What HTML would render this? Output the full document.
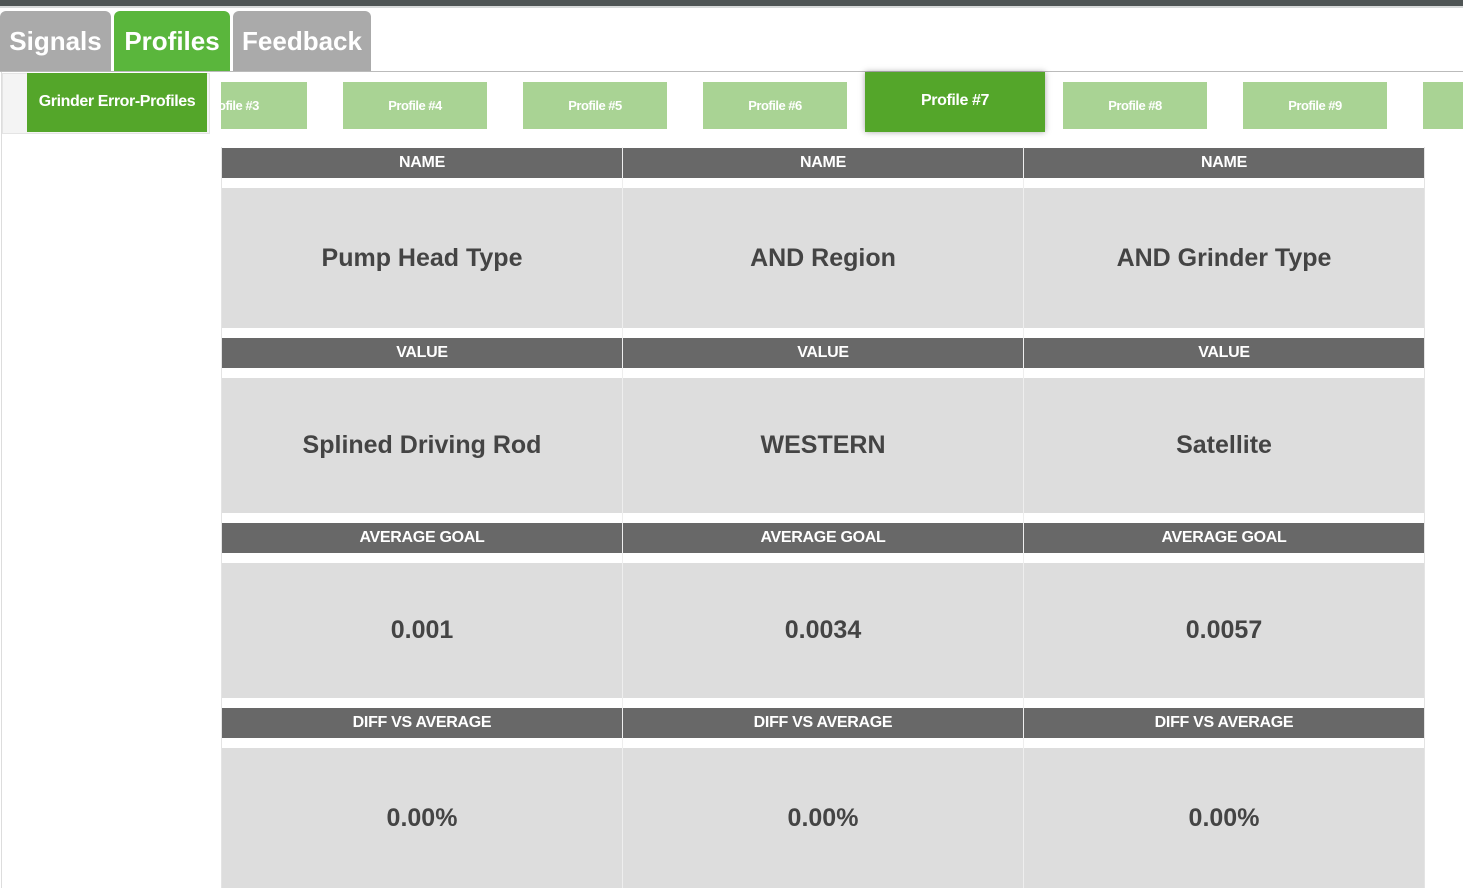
<!DOCTYPE html><html><head><style>
body{margin:0;width:1463px;height:888px;overflow:hidden;background:#fff;font-family:"Liberation Sans",sans-serif;position:relative}
.a{position:absolute;box-sizing:border-box}
.tab{top:11px;height:60px;color:#fff;font-weight:bold;font-size:26px;line-height:60px;text-align:center;border-radius:6px 6px 0 0}
.p{top:82px;height:47px;background:#a9d394;color:#fff;font-weight:bold;font-size:13px;line-height:47px;text-align:center;letter-spacing:-0.5px}
.h{background:#686868;color:#fff;font-weight:bold;font-size:16px;height:30px;line-height:30px;text-align:center;width:400px;letter-spacing:-0.3px}
.c{background:#dddddd;color:#444;font-weight:bold;font-size:25px;text-align:center;width:400px;display:flex;align-items:center;justify-content:center}
</style></head><body>
<div class="a" style="left:0;top:0;width:1463px;height:6px;background:#4f5555"></div>
<div class="a" style="left:0;top:6px;width:1463px;height:2px;background:#d8dada"></div>
<div class="a tab" style="left:0;width:111px;background:#aaa">Signals</div>
<div class="a tab" style="left:114px;width:116px;background:#5ab63c">Profiles</div>
<div class="a tab" style="left:233px;width:138px;background:#aaa">Feedback</div>
<div class="a" style="left:0;top:71px;width:1463px;height:1px;background:#bbb"></div>
<div class="a" style="left:1px;top:72px;width:1px;height:816px;background:#ddd"></div>
<div class="a" style="left:2px;top:73px;width:208px;height:61px;background:#f4f4f4;border:1px solid #e4e4e4"></div>
<div class="a" style="left:27px;top:73px;width:180px;height:59px;background:#54a62a;color:#fff;font-weight:bold;font-size:16px;line-height:58px;text-align:center;letter-spacing:-0.4px">Grinder Error-Profiles</div>
<div class="a p" style="left:221px;width:86px;text-align:left;padding-left:0;overflow:hidden"><span style="margin-left:-3px">ofile #3</span></div>
<div class="a p" style="left:343px;width:144px">Profile #4</div>
<div class="a p" style="left:523px;width:144px">Profile #5</div>
<div class="a p" style="left:703px;width:144px">Profile #6</div>
<div class="a" style="left:865px;top:72px;width:180px;height:60px;background:#54a62a;color:#fff;font-weight:bold;font-size:16px;line-height:58px;text-align:center;box-shadow:0 0 6px rgba(0,0,0,.35);letter-spacing:-0.4px">Profile #7</div>
<div class="a p" style="left:1063px;width:144px">Profile #8</div>
<div class="a p" style="left:1243px;width:144px">Profile #9</div>
<div class="a p" style="left:1423px;width:60px"></div>
<div class="a" style="left:221px;top:147px;width:1px;height:741px;background:#e4e4e4"></div>
<div class="a" style="left:622px;top:147px;width:1px;height:741px;background:#eee"></div>
<div class="a" style="left:1023px;top:147px;width:1px;height:741px;background:#eee"></div>
<div class="a" style="left:1424px;top:147px;width:1px;height:741px;background:#e4e4e4"></div>
<div id="t"></div>
<script>
var cols=[222,623,1024];
var rows=[[148,188,140,"NAME",["Pump Head Type","AND Region","AND Grinder Type"]],
[338,378,135,"VALUE",["Splined Driving Rod","WESTERN","Satellite"]],
[523,563,135,"AVERAGE GOAL",["0.001","0.0034","0.0057"]],
[708,748,140,"DIFF VS AVERAGE",["0.00%","0.00%","0.00%"]]];
var h="";
rows.forEach(function(r){cols.forEach(function(x,i){
h+='<div class="a h" style="left:'+x+'px;top:'+r[0]+'px">'+r[3]+'</div>';
h+='<div class="a c" style="left:'+x+'px;top:'+r[1]+'px;height:'+r[2]+'px">'+r[4][i]+'</div>';});});
document.getElementById("t").innerHTML=h;
</script>
</body></html>
